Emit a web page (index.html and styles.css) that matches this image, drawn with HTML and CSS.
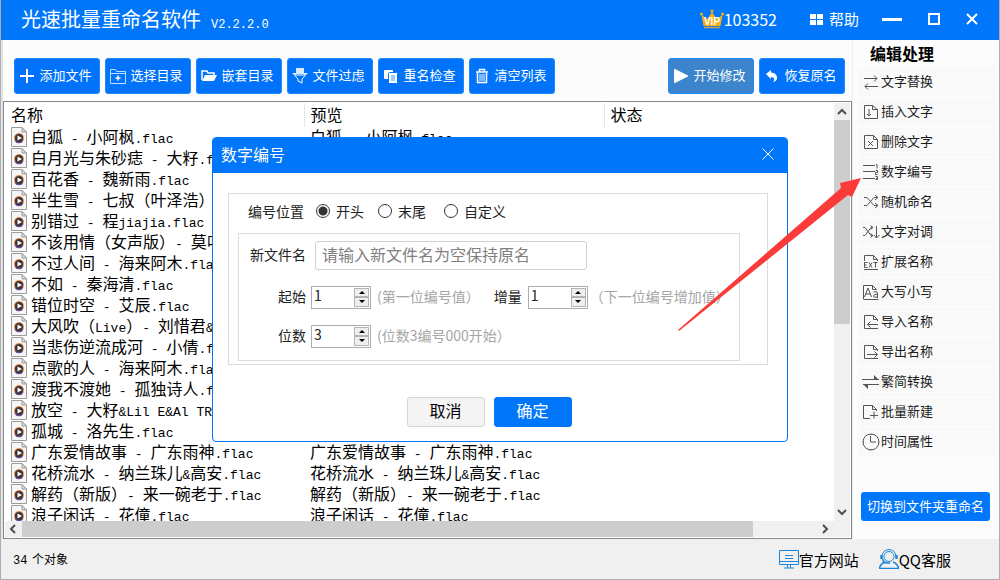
FILE: index.html
```html
<!DOCTYPE html>
<html lang="zh-CN">
<head>
<meta charset="utf-8">
<title>光速批量重命名软件</title>
<link rel="stylesheet" href="styles.css">
</head>
<body>
<svg class="defs" aria-hidden="true">
  <symbol id="media" viewBox="0 0 16 20">
    <path d="M.5.5h10.500l4.500 4.500v14.500H.5z" fill="#f6f6f6" stroke="#9c9c9c"/>
    <path d="M11 .5V5h4.500z" fill="#ddd" stroke="#9c9c9c"/>
    <circle cx="8" cy="11" r="5" fill="#e88a4a"/>
    <path d="M3.500 13.500a5 5 0 0 0 9 0z" fill="#6a4a96"/>
    <circle cx="8" cy="11" r="4" fill="#3a3434"/>
    <path d="M6.500 8.500v5L11 11z" fill="#fff"/>
  </symbol>
</svg>
<div class="window">
  <header class="titlebar">
    <h1 class="app-name">光速批量重命名软件</h1>
    <span class="version">V2.2.2.0</span>
    <div class="title-actions">
      <span class="vip">
        <svg width="24" height="20" viewBox="0 0 24 20"><path d="M3.500 17L1.500 6l6 4L12 3l4.500 7 6-4-2 11z" fill="#f9ae12"/><circle cx="1.500" cy="5" r="1.500" fill="#f9ae12"/><circle cx="12" cy="2" r="1.500" fill="#f9ae12"/><circle cx="22.500" cy="5" r="1.500" fill="#f9ae12"/><path d="M4 18.500h16" stroke="#c9a24e" stroke-width="1.500"/><text x="12" y="16" text-anchor="middle" class="vip-mark">VIP</text></svg>103352</span>
      <button class="help"><svg width="13" height="11" viewBox="0 0 13 11" fill="#fff"><path d="M0 0h6v5H0zM7 0h6v5H7zM0 6h6v5H0zM7 6h6v5H7z"/></svg>帮助</button>
      <button class="win-btn" aria-label="最小化"><svg width="20" height="14" viewBox="0 0 20 14"><path d="M0 7.500h20" stroke="#fff" stroke-width="3"/></svg></button>
      <button class="win-btn" aria-label="最大化"><svg width="12" height="12" viewBox="0 0 12 12"><path d="M1 1h10v10H1z" fill="none" stroke="#fff" stroke-width="2"/></svg></button>
      <button class="win-btn" aria-label="关闭"><svg width="12" height="12" viewBox="0 0 12 12"><path d="M1 1l10 10M11 1L1 11" stroke="#fff" stroke-width="2"/></svg></button>
    </div>
  </header>

  <div class="main">
    <section class="workspace">
      <div class="toolbar">
        <button class="tool"><svg width="16" height="16" viewBox="0 0 16 16"><path d="M8 1v14M1 8h14" stroke="#fff" stroke-width="2"/></svg>添加文件</button>
        <button class="tool"><svg width="16" height="16" viewBox="0 0 16 16" fill="none" stroke="#b9dcff"><path d="M.5 15.500V1.500h5l1 2h9v12zM.5 5.500h15"/><path d="M8 7.500v5M5.500 10h5" stroke="#fff" stroke-width="1.500"/></svg>选择目录</button>
        <button class="tool"><svg width="16" height="16" viewBox="0 0 16 16"><path d="M1 12V3h5l1 2h6v2" fill="none" stroke="#fff" stroke-width="1.500"/><path d="M1 13l3-6h12l-3 6z" fill="#fff"/></svg>嵌套目录</button>
        <button class="tool"><svg width="16" height="16" viewBox="0 0 16 16"><path d="M4 0h8v6H4z" fill="#d8ecff"/><path d="M1 5.500h2.500V7h9V5.500H15L10 11v4l-4-2v-2z" fill="none" stroke="#fff"/></svg>文件过虑</button>
        <button class="tool"><svg width="16" height="16" viewBox="0 0 16 16"><rect x="1" y="2" width="9" height="9" rx="1" fill="#fff"/><rect x="5.500" y="4.500" width="9" height="11" rx="1" fill="#fff" stroke="#0073fa"/><path d="M8 8h4M8 10h4M8 12h4" stroke="#3f98ff"/></svg>重名检查</button>
        <button class="tool"><svg width="16" height="16" viewBox="0 0 16 16" fill="none" stroke="#fff"><path d="M2 4h12M5.500 4V1.500h5V4M3.500 5v9.500h9V5" stroke-width="1.500"/><path d="M6 6v7M8 6v7M10 6v7"/></svg>清空列表</button>
        <button class="tool tool-start"><svg width="16" height="16" viewBox="0 0 16 16"><path d="M1 2v12q0 1 1 1L15 8.500v-1L2 1q-1 0-1 1z" fill="#fff"/></svg>开始修改</button>
        <button class="tool"><svg width="16" height="16" viewBox="0 0 16 16"><path d="M2 6l5-4v2.500c5 .5 6 3 6 5.500 0 2-1.500 3.500-4 4 2-2 1.500-5-2-5V11z" fill="#fff"/></svg>恢复原名</button>
      </div>

      <div class="list">
        <div class="list-view">
          <table class="files">
            <colgroup><col class="col-name"><col class="col-preview"><col></colgroup>
            <thead><tr><th>名称</th><th>预览</th><th>状态</th></tr></thead>
            <tbody>
              <tr><td><svg class="fi"><use href="#media"/></svg>白狐<i> - </i>小阿枫<i>.flac</i></td><td>白狐<i> - </i>小阿枫<i>.flac</i></td><td></td></tr>
              <tr><td><svg class="fi"><use href="#media"/></svg>白月光与朱砂痣<i> - </i>大籽<i>.flac</i></td><td>白月光与朱砂痣<i> - </i>大籽<i>.flac</i></td><td></td></tr>
              <tr><td><svg class="fi"><use href="#media"/></svg>百花香<i> - </i>魏新雨<i>.flac</i></td><td>百花香<i> - </i>魏新雨<i>.flac</i></td><td></td></tr>
              <tr><td><svg class="fi"><use href="#media"/></svg>半生雪<i> - </i>七叔（叶泽浩）<i>.flac</i></td><td>半生雪<i> - </i>七叔（叶泽浩）<i>.flac</i></td><td></td></tr>
              <tr><td><svg class="fi"><use href="#media"/></svg>别错过<i> - </i>程<i>jiajia.flac</i></td><td>别错过<i> - </i>程<i>jiajia.flac</i></td><td></td></tr>
              <tr><td><svg class="fi"><use href="#media"/></svg>不该用情（女声版）<i>- </i>莫叫姐姐<i>.flac</i></td><td>不该用情（女声版）<i>- </i>莫叫姐姐<i>.flac</i></td><td></td></tr>
              <tr><td><svg class="fi"><use href="#media"/></svg>不过人间<i> - </i>海来阿木<i>.flac</i></td><td>不过人间<i> - </i>海来阿木<i>.flac</i></td><td></td></tr>
              <tr><td><svg class="fi"><use href="#media"/></svg>不如<i> - </i>秦海清<i>.flac</i></td><td>不如<i> - </i>秦海清<i>.flac</i></td><td></td></tr>
              <tr><td><svg class="fi"><use href="#media"/></svg>错位时空<i> - </i>艾辰<i>.flac</i></td><td>错位时空<i> - </i>艾辰<i>.flac</i></td><td></td></tr>
              <tr><td><svg class="fi"><use href="#media"/></svg>大风吹（<i>Live</i>）<i>- </i>刘惜君<i>&amp;</i>王赫野<i>.flac</i></td><td>大风吹（<i>Live</i>）<i>- </i>刘惜君<i>&amp;</i>王赫野<i>.flac</i></td><td></td></tr>
              <tr><td><svg class="fi"><use href="#media"/></svg>当悲伤逆流成河<i> - </i>小倩<i>.flac</i></td><td>当悲伤逆流成河<i> - </i>小倩<i>.flac</i></td><td></td></tr>
              <tr><td><svg class="fi"><use href="#media"/></svg>点歌的人<i> - </i>海来阿木<i>.flac</i></td><td>点歌的人<i> - </i>海来阿木<i>.flac</i></td><td></td></tr>
              <tr><td><svg class="fi"><use href="#media"/></svg>渡我不渡她<i> - </i>孤独诗人<i>.flac</i></td><td>渡我不渡她<i> - </i>孤独诗人<i>.flac</i></td><td></td></tr>
              <tr><td><svg class="fi"><use href="#media"/></svg>放空<i> - </i>大籽<i>&amp;Lil E&amp;Al TR.flac</i></td><td>放空<i> - </i>大籽<i>&amp;Lil E&amp;Al TR.flac</i></td><td></td></tr>
              <tr><td><svg class="fi"><use href="#media"/></svg>孤城<i> - </i>洛先生<i>.flac</i></td><td>孤城<i> - </i>洛先生<i>.flac</i></td><td></td></tr>
              <tr><td><svg class="fi"><use href="#media"/></svg>广东爱情故事<i> - </i>广东雨神<i>.flac</i></td><td>广东爱情故事<i> - </i>广东雨神<i>.flac</i></td><td></td></tr>
              <tr><td><svg class="fi"><use href="#media"/></svg>花桥流水<i> - </i>纳兰珠儿<i>&amp;</i>高安<i>.flac</i></td><td>花桥流水<i> - </i>纳兰珠儿<i>&amp;</i>高安<i>.flac</i></td><td></td></tr>
              <tr><td><svg class="fi"><use href="#media"/></svg>解药（新版）<i>- </i>来一碗老于<i>.flac</i></td><td>解药（新版）<i>- </i>来一碗老于<i>.flac</i></td><td></td></tr>
              <tr><td><svg class="fi"><use href="#media"/></svg>浪子闲话<i> - </i>花僮<i>.flac</i></td><td>浪子闲话<i> - </i>花僮<i>.flac</i></td><td></td></tr>
            </tbody>
          </table>
        </div>
        <div class="vbar">
          <svg width="16" height="17" viewBox="0 0 16 17"><path d="M4 11l4-4 4 4" fill="none" stroke="#505050" stroke-width="2"/></svg>
          <div class="vtrack"><div class="vthumb"></div></div>
          <svg width="16" height="17" viewBox="0 0 16 17"><path d="M4 6l4 4 4-4" fill="none" stroke="#505050" stroke-width="2"/></svg>
        </div>
        <div class="hbar">
          <svg width="17" height="16" viewBox="0 0 17 16"><path d="M10 4L6 8l4 4" fill="none" stroke="#505050" stroke-width="2"/></svg>
          <div class="htrack"><div class="hthumb"></div></div>
          <svg width="17" height="16" viewBox="0 0 17 16"><path d="M6 4l4 4-4 4" fill="none" stroke="#505050" stroke-width="2"/></svg>
        </div>
        <div class="corner"></div>
      </div>
    </section>

    <aside class="sidebar">
      <h2 class="side-title">编辑处理</h2>
      <nav class="side-menu">
        <button class="side-item"><svg viewBox="0 0 18 18"><path d="M2 5.500h13M12 2.500l3 3-3 3M16 13.500H3M6 10.500l-3 3 3 3"/></svg>文字替换</button>
        <button class="side-item"><svg viewBox="0 0 18 18"><path d="M2.500 2.500h8l5 4v9h-13zM10.500 2.500v4h5M7 6v7M5 11l2 2 2-2"/></svg>插入文字</button>
        <button class="side-item"><svg viewBox="0 0 18 18"><path d="M2.500 2.500h9l4 4v9h-13zM11.500 2.500v4h4M6 8l5 5M11 8l-5 5"/></svg>删除文字</button>
        <button class="side-item"><svg viewBox="0 0 18 18"><path d="M1 2.500h12M1 8.500h12M1 15.500h12M14 1.500h1v4M13.500 7.500h2v2h-2v2h2M13.500 13.500h2v3h-2M14 15.500h1"/></svg>数字编号</button>
        <button class="side-item"><svg viewBox="0 0 18 18"><path d="M2 4.500h3l7 8h4M2 12.500h3l7-8h4M13 2l3 2.500L13 7M13 10l3 2.500-3 2.500"/></svg>随机命名</button>
        <button class="side-item"><svg viewBox="0 0 18 18"><path d="M1 4.500h2l6 8h2M1 12.500h2l6-8h2M8.500 2.500l2.500 2-2.500 2M8.500 10.500l2.500 2-2.500 2M14.500 3v12M12 12l2.500 3 3-3"/></svg>文字对调</button>
        <button class="side-item"><svg viewBox="0 0 18 18"><path d="M2.500 8V2.500h9l4 4V8M11.500 2.500v4h4M2 16.500h14M2.500 9.500v5h3M2.500 9.500h3M2.500 12h2M7 9.500l3 5M10 9.500l-3 5M11.500 9.500h4M13.500 9.500v5"/></svg>扩展名称</button>
        <button class="side-item"><svg viewBox="0 0 18 18"><path d="M1.500 16V2.500h9l4 4M10.500 2.500v4h4M1.500 16.500h15M2.500 14L6 5l3.500 9M4 11h4M11.500 9q4-1.500 4 1v5M15.500 11q-4 0-4 2t4 1"/></svg>大写小写</button>
        <button class="side-item"><svg viewBox="0 0 18 18"><path d="M15.500 8V6.500l-4-4h-9v13h13.500M11.500 2.500v4h4M16 11.500H5.500M8.500 8.500l-3 3 3 3"/></svg>导入名称</button>
        <button class="side-item"><svg viewBox="0 0 18 18"><path d="M15.500 8V6.500l-4-4h-9v13h13.500M11.500 2.500v4h4M5 11.500h10.500M12.500 8.500l3 3-3 3"/></svg>导出名称</button>
        <button class="side-item"><svg viewBox="0 0 18 18"><path d="M0 6.500h17M17 11.500H1"/><path d="M12 2l5 5h-5zM6 16l-5-5h5z" class="solid"/></svg>繁简转换</button>
        <button class="side-item"><svg viewBox="0 0 18 18"><path d="M14.500 8V6.500l-4-4h-9v13H8M10.500 2.500v4h4M8 12.500h8M12 8.500v7"/></svg>批量新建</button>
        <button class="side-item"><svg viewBox="0 0 18 18"><circle cx="9" cy="9" r="8"/><path d="M8.500 3v6H14M9 1v1M9 16v1M1 9h1M16 9h1"/></svg>时间属性</button>
      </nav>
      <button class="switch-btn">切换到文件夹重命名</button>
    </aside>
  </div>

  <footer class="statusbar">
    <span class="count"><i>34</i> 个对象</span>
    <a class="foot-link" href="#"><svg width="20" height="20" viewBox="0 0 20 20" fill="none" stroke="#1c86d8"><path d="M.5 1.500h19v14H.5zM.5 12.500h19M6 6.500h8M6 9.500h8M8.500 16v3M11.500 16v3M5 19h10"/></svg>官方网站</a>
    <a class="foot-link" href="#"><svg width="20" height="20" viewBox="0 0 20 20" fill="none" stroke="#1c86d8"><circle cx="10" cy="7.500" r="5"/><path d="M3 7.500a7 7 0 0 1 14 0" /><path d="M2.500 6v4M17.500 6v4" stroke-width="2.500"/><path d="M3.500 10q1 4 5.500 4h2M6 13q-5 2-5.500 6.500h19Q19 15 14 13" stroke-width="1.500"/></svg>QQ客服</a>
  </footer>
</div>

<div class="overlay">
  <form class="dialog" role="dialog" aria-labelledby="dlg-title">
    <div class="dlg-head">
      <h2 id="dlg-title" class="dlg-title">数字编号</h2>
      <button type="button" class="dlg-close" aria-label="关闭"><svg width="12" height="12" viewBox="0 0 12 12"><path d="M.5.5l11 11M11.500.5l-11 11" stroke="#fff"/></svg></button>
    </div>
    <div class="dlg-body">
      <div class="group">
        <div class="positions" role="radiogroup" aria-label="编号位置">
          <span class="pos-label">编号位置</span>
          <label class="radio"><input type="radio" name="pos" checked>开头</label>
          <label class="radio"><input type="radio" name="pos">末尾</label>
          <label class="radio"><input type="radio" name="pos">自定义</label>
        </div>
        <div class="subgroup">
          <div class="field-row">
            <label class="field-label" for="newname">新文件名</label>
            <input class="name-input" id="newname" type="text" placeholder="请输入新文件名为空保持原名">
          </div>
          <div class="field-row">
            <label class="field-label" for="start">起始</label>
            <span class="spin"><input id="start" type="number" value="1"><span class="spin-btns"><button type="button" class="up" aria-label="增加"></button><button type="button" class="down" aria-label="减少"></button></span></span>
            <span class="hint">(第一位编号值）</span>
            <label class="step-label" for="step">增量</label>
            <span class="spin"><input id="step" type="number" value="1"><span class="spin-btns"><button type="button" class="up" aria-label="增加"></button><button type="button" class="down" aria-label="减少"></button></span></span>
            <span class="hint hint-step">（下一位编号增加值）</span>
          </div>
          <div class="field-row">
            <label class="field-label" for="digits">位数</label>
            <span class="spin"><input id="digits" type="number" value="3"><span class="spin-btns"><button type="button" class="up" aria-label="增加"></button><button type="button" class="down" aria-label="减少"></button></span></span>
            <span class="hint">(位数3编号000开始）</span>
          </div>
        </div>
      </div>
      <div class="dlg-actions">
        <button type="button" class="btn">取消</button>
        <button type="button" class="btn btn-primary">确定</button>
      </div>
    </div>
  </form>
</div>

<svg class="pointer" width="184" height="154" viewBox="0 0 184 154" aria-hidden="true"><path d="M0 152L163 10l-1-5L183 0l-9 19-4-2L1 153z" fill="#fb3b39"/></svg>
</body>
</html>
```

FILE: styles.css
```css
* { box-sizing: border-box; }

body {
  margin: 0;
  font-family: "Noto Sans CJK SC", sans-serif;
  font-size: 14px;
  color: #000;
}

button, input { font: inherit; color: inherit; }
button { padding: 0; border: 0; background: none; cursor: pointer; }
h1, h2 { margin: 0; font-weight: normal; }
svg { flex: none; }
.defs { display: none; }

.window {
  display: flex;
  flex-direction: column;
  height: 100vh;
  border: 1px solid #adadad;
  border-top: 0;
  background: #fcfcfc;
}

/* Title bar */
.titlebar {
  flex: none;
  display: flex;
  align-items: center;
  height: 40px;
  padding: 0 21px 2px 20px;
  background: #0077fa;
  color: #fff;
}
.app-name { font-size: 20px; line-height: 38px; }
.version {
  margin: 11px 0 0 10px;
  font-family: "Liberation Mono", monospace;
  font-size: 12px;
}
.title-actions {
  display: flex;
  align-items: center;
  margin-left: auto;
}
.vip { display: flex; align-items: center; font-size: 16px; line-height: 24px; }
.vip-mark { font: bold 10px "Liberation Sans", sans-serif; fill: #fff; }
.help {
  display: flex;
  align-items: center;
  gap: 6px;
  margin: 0 0 0 33px;
  font-size: 15px;
  line-height: 24px;
}
.win-btn { display: flex; align-items: center; height: 24px; margin-left: 23px; }
.win-btn + .win-btn { margin-left: 26px; }

/* Workspace */
.main {
  flex: 1;
  display: flex;
  min-height: 0;
  border-left: 2px solid #e3e3e3;
}
.workspace { flex: 1; display: flex; flex-direction: column; min-width: 0; }
.toolbar { flex: none; display: flex; gap: 5px; padding: 18px 7px 7px 11px; }
.tool {
  display: flex;
  align-items: center;
  justify-content: center;
  gap: 4px;
  width: 86px;
  height: 36px;
  padding: 0 3px 3px 0;
  border: 1px solid #1a8cff;
  border-radius: 3px;
  background: #0073fa;
  color: #fff;
  font-size: 13px;
}
.tool svg { margin-top: 3px; }
.tool-start { margin-left: auto; background: #3c85cc; }

/* File list */
.list {
  flex: 1;
  display: grid;
  grid-template-columns: 1fr 16px;
  grid-template-rows: 1fr 16px;
  min-height: 0;
  padding: 1px;
  border: 1px solid #828790;
  background: #fff;
}
.list-view { min-width: 0; min-height: 0; overflow: hidden; }
.files {
  width: 100%;
  border-collapse: collapse;
  table-layout: fixed;
  font-size: 16px;
}
.col-name { width: 299px; }
.col-preview { width: 300px; }
.files th {
  height: 24px;
  padding: 0 6px 2px;
  border-right: 1px solid #e5e5e5;
  font-weight: normal;
  line-height: 22px;
  text-align: left;
}
.files th:last-child { border-right: 0; }
.files td {
  height: 21px;
  padding: 0 6px;
  overflow-x: clip;
  line-height: 18px;
  vertical-align: top;
  white-space: pre;
}
.files i {
  font-family: "Liberation Mono", monospace;
  font-size: 13px;
  font-style: normal;
  line-height: 1;
}
.fi { width: 16px; height: 20px; margin-right: 4px; vertical-align: top; }

.vbar { display: flex; flex-direction: column; background: #f0f0f0; }
.vtrack { flex: 1; }
.vthumb { height: 53%; background: #cdcdcd; }
.hbar { display: flex; background: #f0f0f0; }
.htrack { flex: 1; }
.hthumb { width: 92%; height: 100%; background: #cdcdcd; }
.corner { background: #f0f0f0; }

/* Sidebar */
.sidebar {
  flex: none;
  display: flex;
  flex-direction: column;
  width: 147px;
  padding: 2px 3px 0 5px;
  border-left: 1px solid #ececec;
}
.side-title { padding-left: 12px; font-size: 16px; font-weight: bold; line-height: 22px; }
.side-menu { display: flex; flex-direction: column; gap: 2px; margin-top: 4px; }
.side-item {
  display: flex;
  align-items: center;
  gap: 1px;
  height: 28px;
  padding: 0 0 3px 4px;
  border-radius: 2px;
  background: #f9f9f9;
  color: #1c1c1c;
  font-size: 13px;
}
.side-item svg { width: 18px; height: 18px; margin-top: 3px; fill: none; stroke: #555; }
.side-item .solid { fill: #555; stroke: none; }
.switch-btn {
  height: 29px;
  margin: 36px 6px 0 3px;
  padding-bottom: 2px;
  border-radius: 3px;
  background: #0077fa;
  color: #fff;
  font-size: 13px;
}

/* Status bar */
.statusbar {
  flex: none;
  display: flex;
  align-items: center;
  height: 40px;
  padding: 0 48px 0 12px;
  background: #f0f0f0;
}
.count { margin-right: auto; font-size: 12px; }
.count i { margin-right: 2px; font-family: "Liberation Mono", monospace; font-style: normal; }
.foot-link {
  display: flex;
  align-items: center;
  margin-left: 20px;
  color: #000;
  font-size: 15px;
  text-decoration: none;
}

/* Dialog */
.overlay {
  position: fixed;
  inset: 0;
  display: flex;
  align-items: center;
  justify-content: center;
  padding-bottom: 2px;
}
.dialog {
  width: 576px;
  border: 1px solid #0077fa;
  border-radius: 4px;
  background: #fff;
  overflow: hidden;
}
.dlg-head {
  display: flex;
  align-items: center;
  justify-content: space-between;
  height: 35px;
  padding: 0 13px 2px 8px;
  background: #0077fa;
  color: #fff;
}
.dlg-title { font-size: 16px; line-height: 30px; }
.dlg-close { display: flex; }
.dlg-body { padding: 20px 19px 14px 15px; }
.group { padding: 0 27px 3px 9px; border: 1px solid #dcdcdc; color: #222; }
.positions { display: flex; align-items: center; height: 39px; padding: 0 0 4px 10px; }
.pos-label { padding-bottom: 1px; }
.radio { display: flex; align-items: center; gap: 6px; margin-left: 14px; }
.radio:first-of-type { margin-left: 12px; }
.radio:last-of-type { margin-left: 18px; }
.radio input {
  appearance: none;
  width: 14px;
  height: 14px;
  margin: 0;
  border: 1px solid #333;
  border-radius: 50%;
  background: #fff;
}
.radio input:checked { background: radial-gradient(circle, #333 4px, #fff 5px); }
.subgroup {
  display: flex;
  flex-direction: column;
  gap: 16px;
  padding: 7px 0 12px 10px;
  border: 1px solid #dcdcdc;
}
.field-row { display: flex; align-items: center; white-space: nowrap; line-height: 18px; }
.field-label { width: 57px; margin-right: 5px; padding-bottom: 3px; text-align: right; }
.name-input {
  width: 272px;
  height: 29px;
  margin-left: 4px;
  padding: 0 6px 3px;
  border: 1px solid #d0d0d0;
  border-radius: 3px;
  font-size: 16px;
}
.name-input::placeholder { color: #808080; }
.spin {
  display: flex;
  width: 60px;
  height: 23px;
  border: 1px solid #abadb3;
  background: #fff;
}
.spin input {
  flex: 1;
  width: 0;
  height: 16px;
  padding: 0 2px;
  border: 0;
  background: none;
  appearance: textfield;
  font-size: 14px;
  line-height: 16px;
}
.spin input::-webkit-inner-spin-button { display: none; }
.spin-btns { display: flex; flex-direction: column; width: 16px; padding: 1px 1px 1px 0; }
.spin-btns button {
  flex: 1;
  display: flex;
  align-items: center;
  justify-content: center;
  border: 1px solid #b4b4b4;
  background: #efefef;
}
.spin-btns button::before { content: ""; border: 3px solid transparent; }
.spin-btns .up::before { border-top: 0; border-bottom-color: #000; }
.spin-btns .down::before { border-bottom: 0; border-top-color: #000; }
.hint { margin-left: 6px; padding-bottom: 3px; color: #a6a6a6; }
.hint-step { margin-left: 2px; }
.step-label { margin: 0 6px 0 14px; padding-bottom: 3px; }
.dlg-actions { display: flex; justify-content: center; gap: 9px; padding: 32px 18px 0 0; }
.btn {
  width: 78px;
  height: 30px;
  padding-bottom: 3px;
  border: 1px solid #d5d5d5;
  border-radius: 3px;
  background: #f4f4f4;
  font-size: 16px;
  line-height: 24px;
}
.btn-primary { border-color: #0077fa; background: #0077fa; color: #fff; }

/* Arrow pointing at the active menu entry */
.pointer { position: absolute; top: 178px; right: 138px; pointer-events: none; }
```
